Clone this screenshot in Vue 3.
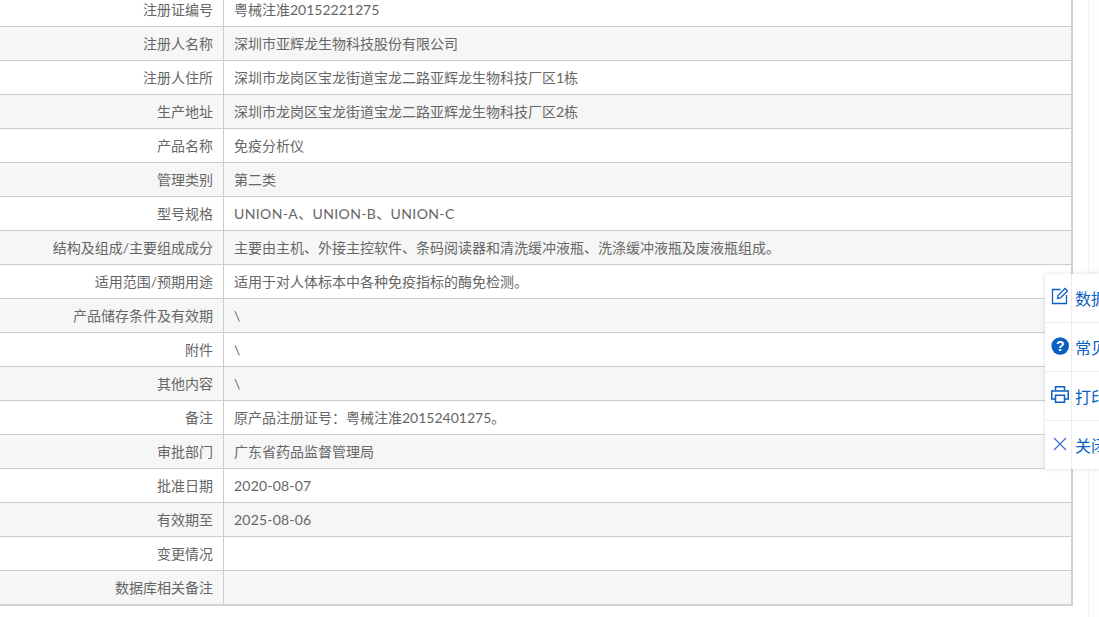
<script setup>
const rows = [
  ['注册证编号', '粤械注准20152221275'],
  ['注册人名称', '深圳市亚辉龙生物科技股份有限公司'],
  ['注册人住所', '深圳市龙岗区宝龙街道宝龙二路亚辉龙生物科技厂区1栋'],
  ['生产地址', '深圳市龙岗区宝龙街道宝龙二路亚辉龙生物科技厂区2栋'],
  ['产品名称', '免疫分析仪'],
  ['管理类别', '第二类'],
  ['型号规格', 'UNION-A、UNION-B、UNION-C', 'wide'],
  ['结构及组成/主要组成成分', '主要由主机、外接主控软件、条码阅读器和清洗缓冲液瓶、洗涤缓冲液瓶及废液瓶组成。'],
  ['适用范围/预期用途', '适用于对人体标本中各种免疫指标的酶免检测。'],
  ['产品储存条件及有效期', '\\'],
  ['附件', '\\'],
  ['其他内容', '\\'],
  ['备注', '原产品注册证号：粤械注准20152401275。'],
  ['审批部门', '广东省药品监督管理局'],
  ['批准日期', '2020-08-07', 'date'],
  ['有效期至', '2025-08-06', 'date'],
  ['变更情况', ''],
  ['数据库相关备注', ''],
]
</script>

<template>
  <div class="page">
    <div class="table">
      <div v-for="(r, i) in rows" :key="i" class="row" :class="{ alt: i % 2 === 1 }">
        <div class="label">{{ r[0] }}</div>
        <div class="value" :class="r[2]">{{ r[1] }}</div>
      </div>
    </div>
    <div class="gutter"></div>
    <div class="side">
      <div class="item">
        <div class="ic">
          <svg width="18" height="18" viewBox="0 0 18 18" fill="none" stroke="#0b5fc0" stroke-width="1.3">
            <path d="M9.5 2.5H1.5V16.5H15.5V8" />
            <path d="M6.5 11.5L7 8.5L14 1.5L16.5 4L9.5 11Z" />
          </svg>
        </div>
        <span class="txt">数据</span>
      </div>
      <div class="item">
        <div class="ic">
          <svg width="19" height="19" viewBox="0 0 19 19">
            <circle cx="9.2" cy="10" r="8.8" fill="#0b5fc0" />
            <text x="9.2" y="15" text-anchor="middle" class="q">?</text>
          </svg>
        </div>
        <span class="txt">常见</span>
      </div>
      <div class="item">
        <div class="ic">
          <svg width="19" height="19" viewBox="0 0 19 19" fill="none" stroke="#0b5fc0" stroke-width="1.5">
            <path d="M4.5 5.5V1.75H13.5V5.5" />
            <path d="M4.5 14H0.75V6H17.25V14H13.5" />
            <path d="M4.5 10.25H13.5V17.25H4.5Z" />
          </svg>
        </div>
        <span class="txt">打印</span>
      </div>
      <div class="item last">
        <div class="ic">
          <svg width="18" height="18" viewBox="0 0 18 18" fill="none" stroke="#3f72c4" stroke-width="1.2">
            <path d="M3 4L15 16M15 4L3 16" />
          </svg>
        </div>
        <span class="txt">关闭</span>
      </div>
    </div>
  </div>
</template>

<style>
html, body { margin: 0; padding: 0; overflow: hidden; background: #fff; }
</style>

<style scoped>
.page {
  position: relative;
  width: 1099px;
  height: 617px;
  overflow: hidden;
  font-family: Lato, "Noto Sans CJK SC", sans-serif;
  font-size: 14px;
  color: #666;
}
.table {
  width: 1071px;
  margin-top: -7px;
  border-right: 2px solid #d0d0d4;
  border-bottom: 2px solid #d4d4d8;
}
.row {
  display: flex;
  height: 33px;
  border-bottom: 1px solid #ccc;
  line-height: 33px;
  background: #fff;
}
.row:last-child { border-bottom: 0; }
.row.alt { background: #f6f6f6; }
.label {
  width: 213px;
  padding-right: 10px;
  text-align: right;
  border-right: 1px solid #ccc;
  white-space: nowrap;
}
.value {
  flex: 1;
  padding-left: 10px;
  white-space: nowrap;
}
.value.wide { letter-spacing: 0.38px; }
.value.date { letter-spacing: 0.2px; }
.gutter {
  position: absolute;
  top: 0;
  bottom: 0;
  left: 1088px;
  width: 11px;
  border-left: 1px solid #f0f0f2;
  background: #fdfdfd;
}
.side {
  position: absolute;
  left: 1045px;
  top: 274px;
  width: 90px;
  background: #fff;
  box-shadow: 0 0 4px rgba(60, 60, 110, 0.18);
}
.item {
  display: flex;
  height: 48px;
  border-bottom: 1px solid #eaecf4;
  align-items: center;
}
.item.last { border-bottom: 0; }
.ic {
  width: 27px;
  height: 48px;
  flex: none;
  box-sizing: border-box;
  padding: 13px 0 0 6px;
  border-right: 1px solid #eaecf4;
}
.ic svg { display: block; }
.txt {
  margin-left: 3px;
  color: #0b5fc0;
  font-size: 16px;
  white-space: nowrap;
}
.q {
  font-family: "Liberation Sans", sans-serif;
  font-size: 14px;
  font-weight: 700;
  fill: #fff;
}
</style>
